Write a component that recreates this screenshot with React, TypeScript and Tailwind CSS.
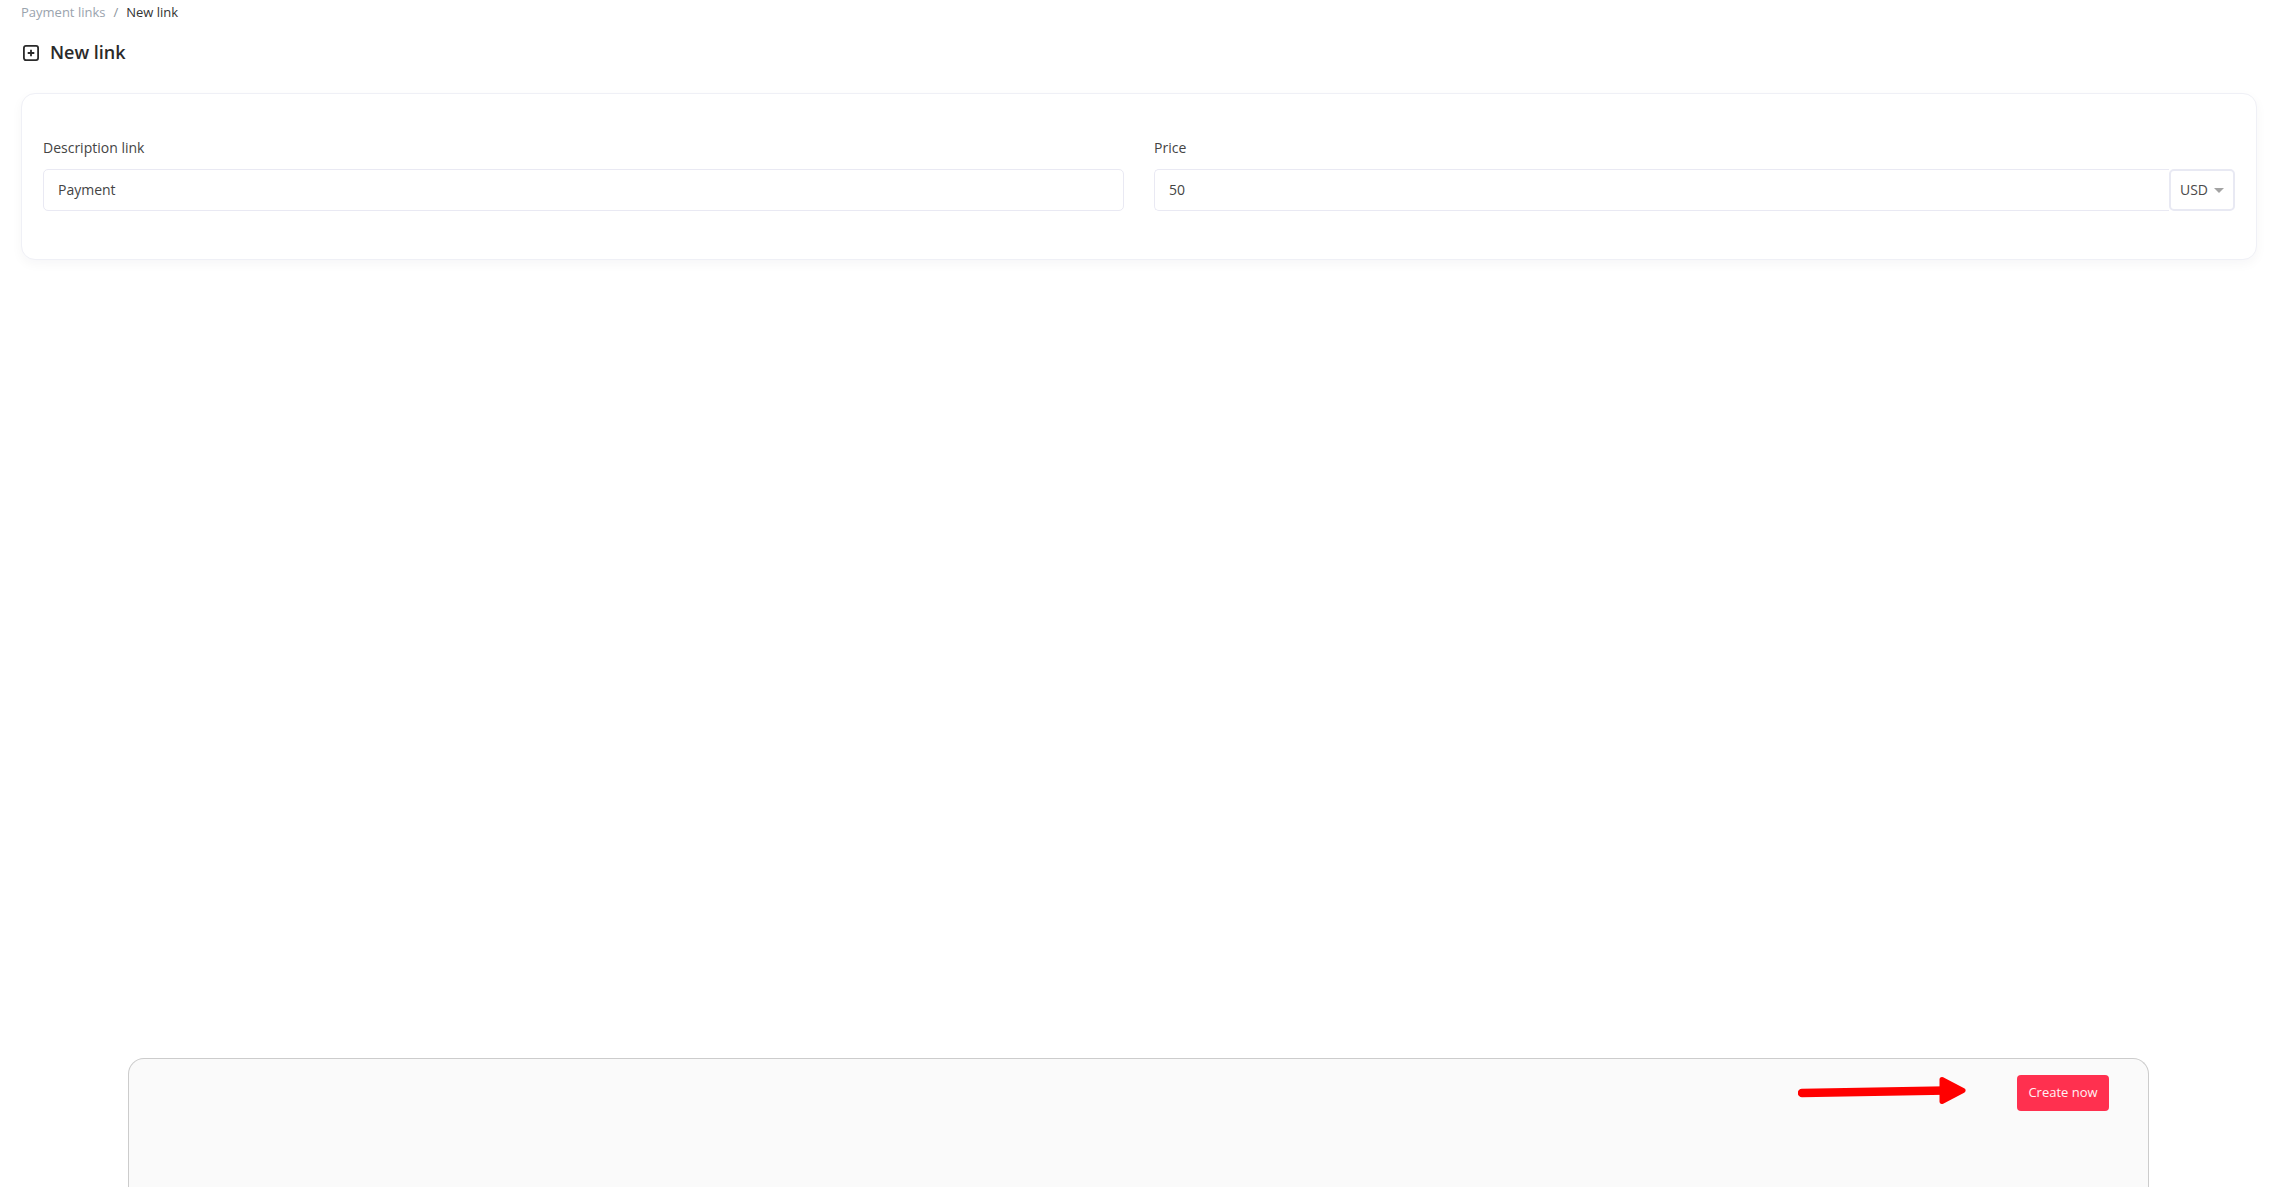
export default function App() {
  return (
    <div className="h-screen flex flex-col bg-white overflow-hidden font-['Open_Sans','Noto_Sans',sans-serif] text-[#444444]">
      <div className="pl-[21px] pr-3">
        <nav className="flex items-center h-6 text-[13px] leading-6">
          <span className="text-[#9aa3ad]">Payment links</span>
          <span className="mx-[8px] text-[#8a929b]">/</span>
          <span className="text-[#333333]">New link</span>
        </nav>
        <h1 className="flex items-center mt-[16px] h-6 text-[18px] font-semibold leading-6 text-[#2a2a2a]">
          <svg className="w-[20px] h-[20px] mr-[9px] mt-[1px]" viewBox="0 0 20 20" fill="none" stroke="#2a2a2a" strokeWidth="1.8">
            <rect x="2.9" y="2.9" width="14.2" height="14.2" rx="2" />
            <path d="M10 6.7v6.6M6.7 10h6.6" />
          </svg>
          New link
        </h1>
      </div>
      <div className="mt-[29px] ml-[21px] mr-3 h-[167px] rounded-[14px] border border-[#eff0f6] bg-white shadow-[0_4px_12px_rgba(20,20,43,0.04)] px-[21px] pt-[43px]">
        <div className="grid grid-cols-2 gap-[30px]">
          <div>
            <label className="block text-[14px] leading-[22px] mb-[10px]">Description link</label>
            <div className="h-[42px] flex items-center rounded-[5px] border border-[#e9e9f3] px-[14px] pb-[1px] text-[14px]">Payment</div>
          </div>
          <div>
            <label className="block text-[14px] leading-[22px] mb-[10px]">Price</label>
            <div className="flex h-[42px]">
              <div className="flex-1 flex items-center rounded-l-[5px] border border-[#e9e9f3] border-r-0 px-[14px] pb-[1px] text-[14px]">50</div>
              <div className="w-[66px] flex items-center justify-center gap-[6px] rounded-[5px] border-2 border-[#e8e9f3] pb-[1px] text-[14px] text-[#4a4a4a]">
                USD
                <svg className="mt-[1px]" width="10" height="5" viewBox="0 0 10 5"><path d="M0 0h10L5 5z" fill="#a3a3a3" /></svg>
              </div>
            </div>
          </div>
        </div>
      </div>
      <div className="mt-auto ml-[128px] mr-[120px] h-[129px] rounded-t-[16px] border border-b-0 border-[#cccccc] bg-[#fafafa] flex justify-end items-start pt-[16px] pr-[39px]">
        <svg className="mr-[51px] mt-[1px]" width="168" height="30" viewBox="0 0 168 30" fill="none">
          <path d="M4 17 L 148 14.5" stroke="#ff0000" strokeWidth="8.5" strokeLinecap="round" />
          <path d="M144 3.5 L165 14.5 L144 25.5 Z" fill="#ff0000" stroke="#ff0000" strokeWidth="5" strokeLinejoin="round" />
        </svg>
        <button className="w-[92px] h-[36px] rounded-[4px] bg-[#ff304f] text-[#fff2f4] text-[13px]">Create now</button>
      </div>
    </div>
  );
}
